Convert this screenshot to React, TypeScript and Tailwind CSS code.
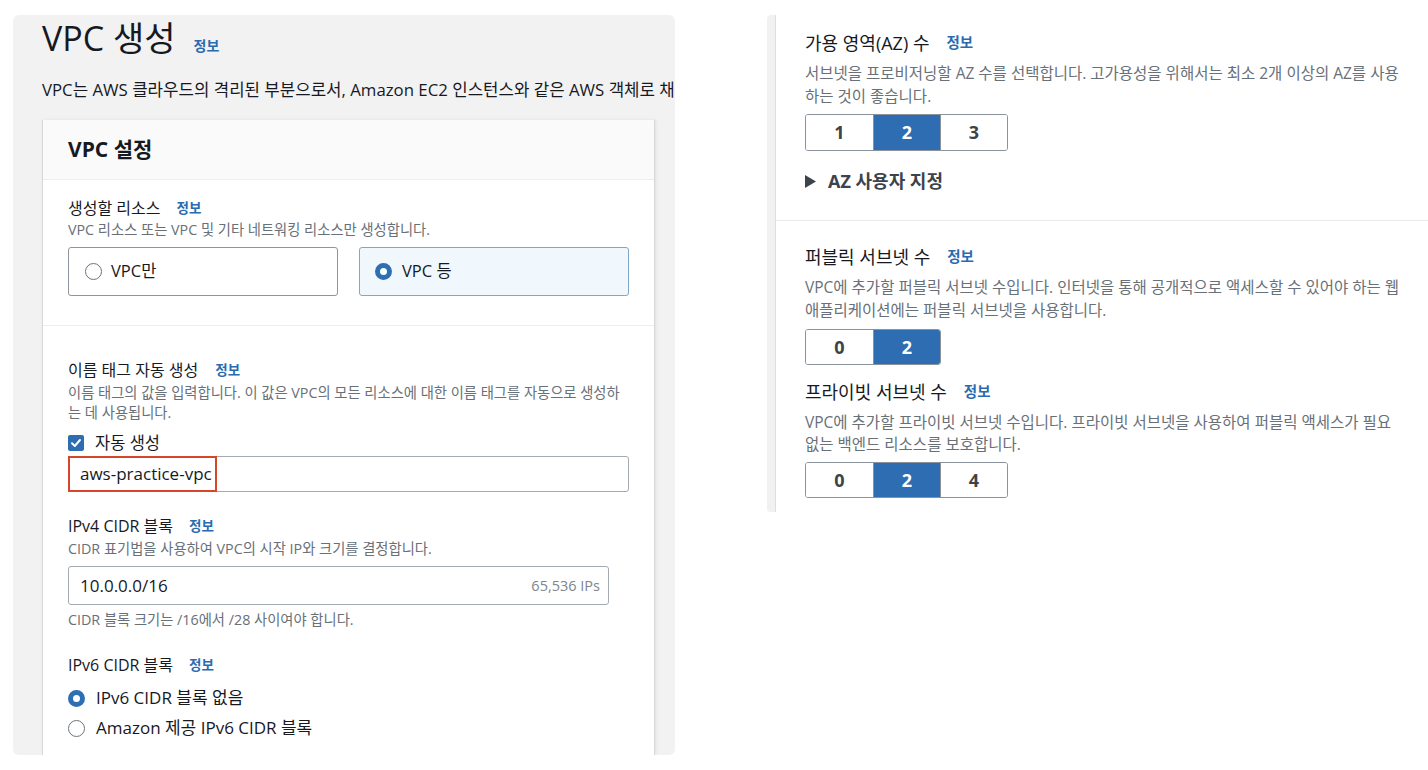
import React from 'react';

const FONT = "font-['Open_Sans','Noto_Sans_CJK_KR',sans-serif]";

function Info({ className = 'text-[13.5px]' }: { className?: string }) {
  return <span className={`font-bold text-[#2a6bb0] ${className}`}>정보</span>;
}

function Radio({ checked }: { checked: boolean }) {
  if (checked) {
    return <span className="inline-block w-[17px] h-[17px] rounded-full border-[5px] border-[#2e6fb4] bg-white shrink-0" />;
  }
  return <span className="inline-block w-[17px] h-[17px] rounded-full border-[1.5px] border-[#6b737c] bg-white shrink-0" />;
}

function Segmented({ items, selected }: { items: string[]; selected: string }) {
  return (
    <div className="flex h-full w-fit rounded-[3px] border border-[#8a939c] overflow-hidden">
      {items.map((it, i) => (
        <div
          key={it}
          className={`w-[67px] h-full flex items-center justify-center text-[18px] font-bold ${
            it === selected ? 'bg-[#2e6db1] text-white' : 'bg-white text-[#3d434a]'
          } ${i > 0 ? 'border-l border-[#8a939c]' : ''}`}
        >
          {it}
        </div>
      ))}
    </div>
  );
}

function LeftPanel() {
  return (
    <div className="ml-[13px] mt-[15px] w-[662px] h-[740px] shrink-0 bg-[#f2f2f2] rounded-[6px] overflow-hidden flex flex-col pl-[29px]">
      {/* 타이틀 */}
      <div className="h-[46px] flex items-baseline gap-[18px] text-[#16191f]">
        <span className="text-[34px] leading-[46px]">VPC 생성</span>
        <Info className="text-[14px]" />
      </div>
      <div className="mt-[17px] text-[16.8px] leading-[24px] whitespace-nowrap text-[#16191f]">
        VPC는 AWS 클라우드의 격리된 부분으로서, Amazon EC2 인스턴스와 같은 AWS 객체로 채워져 있습니다.
      </div>

      {/* VPC 설정 카드 */}
      <div className="mt-[18px] w-[613px] flex-1 bg-white border-l border-r border-[#d8d8d8] shadow-[1px_0_3px_rgba(0,0,0,0.08)]">
        <div className="h-[60px] bg-[#fafafa] border-b border-[#ededed] flex items-center pl-[25px] text-[21px] font-bold text-[#16191f]">
          VPC 설정
        </div>

        {/* 생성할 리소스 */}
        <div className="pl-[25px] pr-[25px] pt-[17px] pb-[29px] border-b border-[#eeeeee]">
          <div className="h-[22px] flex items-center gap-[16px] text-[16px] text-[#16191f]">
            <span>생성할 리소스</span>
            <Info />
          </div>
          <div className="h-[20px] mt-[1px] flex items-center text-[14.3px] text-[#687078]">
            VPC 리소스 또는 VPC 및 기타 네트워킹 리소스만 생성합니다.
          </div>
          <div className="mt-[7px] flex gap-[21px]">
            <div className="w-[271px] h-[49px] rounded-[3px] border border-[#8d959e] flex items-center pl-[16px] gap-[9px] text-[16.5px] text-[#16191f]">
              <Radio checked={false} />
              <span>VPC만</span>
            </div>
            <div className="w-[271px] h-[49px] rounded-[3px] border border-[#7fa7c8] bg-[#f1f8fd] flex items-center pl-[15px] gap-[10px] text-[16.5px] text-[#16191f]">
              <Radio checked />
              <span>VPC 등</span>
            </div>
          </div>
        </div>

        <div className="pl-[25px] pr-[26px]">
          {/* 이름 태그 */}
          <div className="mt-[33px] h-[22px] flex items-center gap-[17px] text-[16px] text-[#16191f]">
            <span>이름 태그 자동 생성</span>
            <Info />
          </div>
          <div className="mt-[2px] text-[14.3px] leading-[19.5px] text-[#687078] whitespace-nowrap">
            이름 태그의 값을 입력합니다. 이 값은 VPC의 모든 리소스에 대한 이름 태그를 자동으로 생성하
            <br />는 데 사용됩니다.
          </div>
          <div className="mt-[10px] h-[22px] flex items-center gap-[11px] text-[16.5px] text-[#16191f]">
            <span className="w-[16px] h-[16px] rounded-[2px] bg-[#2e6db1] flex items-center justify-center">
              <svg width="12" height="12" viewBox="0 0 12 12" fill="none">
                <path d="M2 6.3 L4.8 9 L10 3" stroke="white" strokeWidth="2" strokeLinecap="round" strokeLinejoin="round" />
              </svg>
            </span>
            <span>자동 생성</span>
          </div>
          <div className="mt-[2px] h-[36px] w-[561px] rounded-[3px] border border-[#a3aab1] flex items-stretch">
            <span className="-my-[1px] -ml-[1px] pl-[10px] pr-[3px] border-2 border-[#d7452b] flex items-center text-[17px] text-[#16191f]">
              aws-practice-vpc
            </span>
          </div>

          {/* IPv4 */}
          <div className="mt-[23px] h-[22px] flex items-center gap-[16px] text-[16px] text-[#16191f]">
            <span>IPv4 CIDR 블록</span>
            <Info />
          </div>
          <div className="mt-[2px] h-[20px] flex items-center text-[14.3px] text-[#687078]">
            CIDR 표기법을 사용하여 VPC의 시작 IP와 크기를 결정합니다.
          </div>
          <div className="mt-[7px] h-[39px] w-[541px] rounded-[3px] border border-[#a3aab1] flex items-center justify-between pl-[11px] pr-[8px]">
            <span className="text-[17px] text-[#16191f]">10.0.0.0/16</span>
            <span className="text-[14.5px] text-[#7d858d]">65,536 IPs</span>
          </div>
          <div className="mt-[5px] h-[20px] flex items-center text-[14.3px] text-[#687078]">
            CIDR 블록 크기는 /16에서 /28 사이여야 합니다.
          </div>

          {/* IPv6 */}
          <div className="mt-[24px] h-[22px] flex items-center gap-[16px] text-[16px] text-[#16191f]">
            <span>IPv6 CIDR 블록</span>
            <Info />
          </div>
          <div className="mt-[10px] h-[24px] flex items-center gap-[11px] text-[17px] text-[#16191f]">
            <Radio checked />
            <span>IPv6 CIDR 블록 없음</span>
          </div>
          <div className="mt-[6px] h-[24px] flex items-center gap-[11px] text-[17px] text-[#16191f]">
            <Radio checked={false} />
            <span>Amazon 제공 IPv6 CIDR 블록</span>
          </div>
        </div>
      </div>
    </div>
  );
}

function RightPanel() {
  return (
    <div className="ml-[92px] mt-[15px] h-[497px] flex-1 flex">
      <div className="w-[8px] bg-[#f1f1f1] rounded-l-[4px]" />
      <div className="flex-1 bg-white border-l border-[#dedede]">
        {/* 가용 영역 */}
        <div className="pl-[29px] pt-[16px] pb-[27px] border-b border-[#eaeaea]">
          <div className="h-[24px] flex items-center gap-[17px] text-[18px] text-[#16191f]">
            <span>가용 영역(AZ) 수</span>
            <Info className="text-[14.5px]" />
          </div>
          <div className="mt-[7px] text-[15.5px] leading-[23px] text-[#687078] whitespace-nowrap">
            서브넷을 프로비저닝할 AZ 수를 선택합니다. 고가용성을 위해서는 최소 2개 이상의 AZ를 사용
            <br />
            하는 것이 좋습니다.
          </div>
          <div className="mt-[6px] h-[37px]">
            <Segmented items={['1', '2', '3']} selected="2" />
          </div>
          <div className="mt-[18px] h-[24px] flex items-center gap-[12px] text-[18px] font-bold text-[#3d434a]">
            <svg width="11" height="13" viewBox="0 0 11 13">
              <polygon points="0,0 11,6.5 0,13" fill="#3d434a" />
            </svg>
            <span>AZ 사용자 지정</span>
          </div>
        </div>

        {/* 서브넷 */}
        <div className="pl-[29px] pt-[24px]">
          <div className="h-[24px] flex items-center gap-[17px] text-[18px] text-[#16191f]">
            <span>퍼블릭 서브넷 수</span>
            <Info className="text-[14.5px]" />
          </div>
          <div className="mt-[7px] text-[15.5px] leading-[23px] text-[#687078] whitespace-nowrap">
            VPC에 추가할 퍼블릭 서브넷 수입니다. 인터넷을 통해 공개적으로 액세스할 수 있어야 하는 웹
            <br />
            애플리케이션에는 퍼블릭 서브넷을 사용합니다.
          </div>
          <div className="mt-[7px] h-[36px]">
            <Segmented items={['0', '2']} selected="2" />
          </div>

          <div className="mt-[15px] h-[24px] flex items-center gap-[17px] text-[18px] text-[#16191f]">
            <span>프라이빗 서브넷 수</span>
            <Info className="text-[14.5px]" />
          </div>
          <div className="mt-[7px] text-[15.5px] leading-[22px] text-[#687078] whitespace-nowrap">
            VPC에 추가할 프라이빗 서브넷 수입니다. 프라이빗 서브넷을 사용하여 퍼블릭 액세스가 필요
            <br />
            없는 백엔드 리소스를 보호합니다.
          </div>
          <div className="mt-[7px] h-[36px]">
            <Segmented items={['0', '2', '4']} selected="2" />
          </div>
        </div>
      </div>
    </div>
  );
}

export default function App() {
  return (
    <div className={`w-[1428px] h-[770px] bg-white overflow-hidden flex items-start ${FONT}`}>
      <LeftPanel />
      <RightPanel />
    </div>
  );
}
